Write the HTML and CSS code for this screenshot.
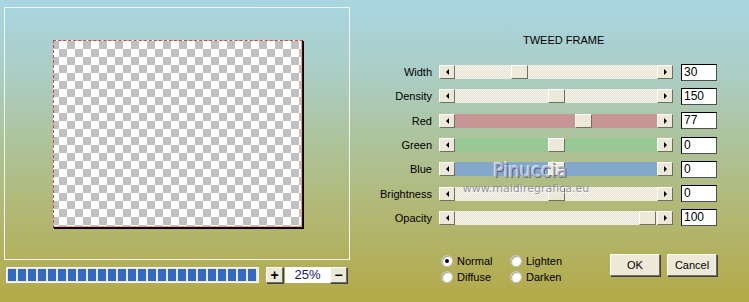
FILE: index.html
```html
<!DOCTYPE html>
<html lang="en">
<head>
    <meta charset="UTF-8">
    <title>Tweed Frame</title>
<link rel="stylesheet" href="styles.css">
</head>
<body>
<div class="dialog">
    <div class="left">
        <div class="preview">
            <div class="canvas"></div>
        </div>
        <div class="toolbar">
            <div class="progress">
                <span></span><span></span><span></span><span></span><span></span>
                <span></span><span></span><span></span><span></span><span></span>
                <span></span><span></span><span></span><span></span><span></span>
                <span></span><span></span><span></span><span></span><span></span>
                <span></span><span></span><span></span><span></span><span></span>
            </div>
            <button class="zoom-btn">+</button>
            <div class="zoom-value">25%</div>
            <button class="zoom-btn">&minus;</button>
        </div>
    </div>

    <div class="right">
        <div class="title">TWEED FRAME</div>

        <div class="sliders">
            <div class="row">
                <label>Width</label>
                <div class="track">
                    <span class="arrow arrow-left"></span>
                    <div class="lane"><span class="thumb" style="left: 56px"></span></div>
                    <span class="arrow arrow-right"></span>
                </div>
                <div class="value">30</div>
            </div>
            <div class="row">
                <label>Density</label>
                <div class="track">
                    <span class="arrow arrow-left"></span>
                    <div class="lane"><span class="thumb" style="left: 93px"></span></div>
                    <span class="arrow arrow-right"></span>
                </div>
                <div class="value">150</div>
            </div>
            <div class="row">
                <label>Red</label>
                <div class="track">
                    <span class="arrow arrow-left"></span>
                    <div class="lane lane-red"><span class="thumb" style="left: 120px"></span></div>
                    <span class="arrow arrow-right"></span>
                </div>
                <div class="value">77</div>
            </div>
            <div class="row">
                <label>Green</label>
                <div class="track">
                    <span class="arrow arrow-left"></span>
                    <div class="lane lane-green"><span class="thumb" style="left: 93px"></span></div>
                    <span class="arrow arrow-right"></span>
                </div>
                <div class="value">0</div>
            </div>
            <div class="row">
                <label>Blue</label>
                <div class="track">
                    <span class="arrow arrow-left"></span>
                    <div class="lane lane-blue"><span class="thumb" style="left: 93px"></span></div>
                    <span class="arrow arrow-right"></span>
                </div>
                <div class="value">0</div>
            </div>
            <div class="row">
                <label>Brightness</label>
                <div class="track">
                    <span class="arrow arrow-left"></span>
                    <div class="lane"><span class="thumb" style="left: 93px"></span></div>
                    <span class="arrow arrow-right"></span>
                </div>
                <div class="value">0</div>
            </div>
            <div class="row">
                <label>Opacity</label>
                <div class="track">
                    <span class="arrow arrow-left"></span>
                    <div class="lane"><span class="thumb" style="left: 184px"></span></div>
                    <span class="arrow arrow-right"></span>
                </div>
                <div class="value">100</div>
            </div>
        </div>

        <div class="footer">
            <div class="modes">
                <div class="radio"><span class="dot checked"></span>Normal</div>
                <div class="radio"><span class="dot"></span>Lighten</div>
                <div class="radio"><span class="dot"></span>Diffuse</div>
                <div class="radio"><span class="dot"></span>Darken</div>
            </div>
            <button class="button">OK</button>
            <button class="button">Cancel</button>
        </div>

        <div class="watermark">
            <div class="wm-name">Pinuccia</div>
            <div class="wm-site">www.maidiregrafica.eu</div>
        </div>
    </div>
</div>
</body>
</html>
```
FILE: styles.css
```css
body {
    margin: 0;
    font-family: "Liberation Sans", Arial, sans-serif;
    font-size: 11px;
    color: #000;
}

.dialog {
    width: 749px;
    height: 302px;
    display: flex;
    background: linear-gradient(to bottom, #a9d6e2 0%, #abcdc4 25%, #adc49e 45%, #b1b978 68%, #b4a948 100%);
    overflow: hidden;
}

/* preview side */
.left {
    width: 351px;
    padding: 7px 0 0 4px;
    box-sizing: border-box;
}

.preview {
    width: 344px;
    height: 251px;
    border: 1px solid #f4f4ee;
    display: flex;
    align-items: center;
    justify-content: center;
}

.canvas {
    width: 248px;
    height: 186px;
    margin-left: 1px;
    background-color: #fff;
    background-image: repeating-conic-gradient(#c0c0c0 0 25%, #fff 0 50%);
    background-size: 16px 16px;
    background-position: 5px 0;
    border-top: 1px dashed #d04848;
    border-left: 1px dashed #d04848;
    border-right: 1px solid #3a0606;
    border-bottom: 1px solid #1a0404;
    box-shadow: inset -1px -1px 0 #e8a0a0, 1px 1px 0 #000;
}

.toolbar {
    display: flex;
    align-items: center;
    margin: 7px 0 0 2px;
}

.progress {
    width: 253px;
    height: 16px;
    background: #ede9dc;
    border: 1px solid #f8f6ef;
    box-sizing: border-box;
    display: flex;
    gap: 2px;
    padding: 1px 0 0 1px;
}

.progress span {
    width: 8px;
    height: 12px;
    background: #316ac5;
}

.zoom-btn {
    width: 17px;
    height: 16px;
    padding: 0;
    margin-left: 7px;
    font-family: "Liberation Sans", Arial, sans-serif;
    font-size: 14px;
    font-weight: bold;
    line-height: 12px;
    background: #ece9d8;
    border: 1px solid;
    border-color: #fff #716f64 #716f64 #fff;
    box-shadow: 1px 1px 0 #404040;
}

.zoom-value + .zoom-btn {
    margin-left: 0;
}

.zoom-value {
    width: 45px;
    height: 16px;
    margin-left: 2px;
    background: #fff;
    color: #17175e;
    font-size: 13px;
    line-height: 16px;
    text-align: center;
}

/* controls side */
.right {
    position: relative;
    flex: 1;
    padding-top: 34px;
}

.title {
    margin-left: 172px;
    line-height: 13px;
}

.sliders {
    margin-top: 13px;
}

.row {
    display: flex;
    align-items: center;
    height: 24.3px;
}

.row label {
    width: 81px;
    text-align: right;
}

.track {
    display: flex;
    width: 234px;
    height: 14px;
    margin-left: 7px;
}

.arrow {
    position: relative;
    width: 16px;
    height: 14px;
    box-sizing: border-box;
    background: #ece9d8;
    border: 1px solid;
    border-color: #fff #716f64 #716f64 #fff;
}

.arrow::after {
    content: "";
    position: absolute;
    top: 3px;
    left: 5px;
    border: 3px solid transparent;
}

.arrow-left::after {
    left: 3px;
    border-right: 3px solid #000;
}

.arrow-right::after {
    left: 6px;
    border-left: 3px solid #000;
}

.lane {
    position: relative;
    flex: 1;
    background-color: #f7f5ee;
    background-image: repeating-conic-gradient(#e4e0d2 0 25%, #f7f5ee 0 50%);
    background-size: 2px 2px;
}

.lane-red {
    background: #c79595;
}

.lane-green {
    background: #98c994;
}

.lane-blue {
    background: #84a8cc;
}

.thumb {
    position: absolute;
    top: 0;
    width: 17px;
    height: 14px;
    box-sizing: border-box;
    background: #ece9d8;
    border: 1px solid;
    border-color: #fff #716f64 #716f64 #fff;
}

.value {
    width: 36px;
    height: 17px;
    margin-left: 8px;
    box-sizing: border-box;
    background: #fff;
    border: 1px solid;
    border-color: #000 #505050 #505050 #000;
    font-size: 12px;
    line-height: 15px;
    padding-left: 2px;
}

.footer {
    display: flex;
    align-items: flex-start;
    margin-top: 24px;
}

.modes {
    display: grid;
    grid-template-columns: 69px 70px;
    row-gap: 3px;
    margin-left: 90px;
}

.radio {
    display: flex;
    align-items: center;
    gap: 4px;
    height: 13px;
    font-size: 11px;
}

.dot {
    position: relative;
    width: 12px;
    height: 12px;
    box-sizing: border-box;
    border-radius: 50%;
    background: #fff;
    border: 1px solid #c4c1b4;
    box-shadow: inset 1px 1px 1px #a8a494;
}

.dot.checked::after {
    content: "";
    position: absolute;
    top: 3px;
    left: 3px;
    width: 4px;
    height: 4px;
    border-radius: 50%;
    background: #000;
}

.button {
    width: 50px;
    height: 22px;
    margin-left: 7px;
    padding: 0;
    font-family: "Liberation Sans", Arial, sans-serif;
    font-size: 11px;
    background: #ece9d8;
    border: 1px solid;
    border-color: #fff #716f64 #716f64 #fff;
    box-shadow: 1px 1px 0 #404040;
}

.footer .modes + .button {
    margin-left: 30px;
}

.watermark {
    position: absolute;
    left: 110px;
    top: 157px;
    width: 130px;
    text-align: center;
    pointer-events: none;
}

.wm-name {
    margin-left: 8px;
    font-family: "DejaVu Sans Condensed", "DejaVu Sans", sans-serif;
    font-size: 20px;
    line-height: 26px;
    color: rgba(176, 184, 214, 0.9);
    text-shadow: 1px 1px 0 rgba(70, 70, 100, 0.7), -1px -1px 0 rgba(255, 255, 255, 0.7);
}

.wm-site {
    font-family: "DejaVu Sans", sans-serif;
    font-size: 11px;
    line-height: 12px;
    color: rgba(130, 130, 145, 0.85);
    text-shadow: 1px 1px 0 rgba(255, 255, 255, 0.6);
}
```
